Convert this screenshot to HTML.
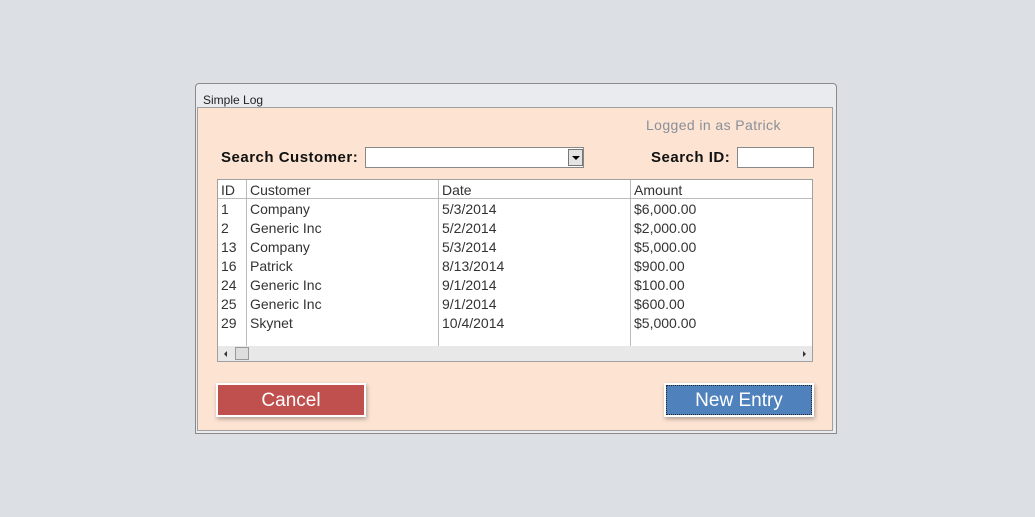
<!DOCTYPE html>
<html><head><style>
body{margin:0;width:1035px;height:517px;background:#dce0e4;position:relative;font-family:"Liberation Sans",sans-serif;overflow:hidden}
.a{position:absolute}
.win{left:195px;top:83px;width:640px;height:349px;border:1px solid #8a8a8a;border-radius:4px 4px 0 0;background:#e9ebee}
.title{left:203px;top:93px;font-size:12px;color:#222}
.body{left:197px;top:107px;width:636px;height:324px;background:#fce3d2;border:1px solid #a0a0a0;box-sizing:border-box}
.lbl{font-weight:bold;font-size:15px;color:#111;letter-spacing:0.5px}
.grid{left:217px;top:179px;width:596px;height:183px;background:#fff;border:1px solid #a0a0a0;box-sizing:border-box}
.row{position:absolute;left:0;font-size:14px;color:#333;height:19px;line-height:19px}
.c{position:absolute;white-space:nowrap}
.btn{position:absolute;color:#fff;font-size:19px;text-align:center;line-height:32px;box-shadow:0 0 0 2px #fff,1px 2px 4px 2px rgba(0,0,0,.3)}
</style></head><body>
<div class="a win"></div>
<div class="a title">Simple Log</div>
<div class="a body"></div>
<div class="a" style="left:646px;top:117px;font-size:14px;color:#8a8f98;letter-spacing:0.4px">Logged in as Patrick</div>
<div class="a lbl" style="left:221px;top:149px">Search Customer:</div>
<div class="a" style="left:365px;top:147px;width:219px;height:21px;background:#fff;border:1px solid #888;box-sizing:border-box"></div>
<div class="a" style="left:568px;top:149px;width:15px;height:17px;background:#e4e4e4;border:1px solid #777;box-sizing:border-box"></div>
<div class="a" style="left:572px;top:156px;width:0;height:0;border-left:4px solid transparent;border-right:4px solid transparent;border-top:4px solid #000"></div>
<div class="a lbl" style="left:651px;top:149px">Search ID:</div>
<div class="a" style="left:737px;top:147px;width:77px;height:21px;background:#fff;border:1px solid #888;box-sizing:border-box"></div>
<div class="a grid">
<div class="a" style="left:0;top:18px;width:594px;height:1px;background:#bbb"></div>
<div class="a" style="left:28px;top:0;width:1px;height:166px;background:#bbb"></div>
<div class="a" style="left:220px;top:0;width:1px;height:166px;background:#bbb"></div>
<div class="a" style="left:412px;top:0;width:1px;height:166px;background:#bbb"></div>
<div class="row" style="top:1px"><span class="c" style="left:3px">ID</span><span class="c" style="left:32px">Customer</span><span class="c" style="left:224px">Date</span><span class="c" style="left:416px">Amount</span></div>
<div class="row" style="top:20px"><span class="c" style="left:3px">1</span><span class="c" style="left:32px">Company</span><span class="c" style="left:224px">5/3/2014</span><span class="c" style="left:416px">$6,000.00</span></div>
<div class="row" style="top:39px"><span class="c" style="left:3px">2</span><span class="c" style="left:32px">Generic Inc</span><span class="c" style="left:224px">5/2/2014</span><span class="c" style="left:416px">$2,000.00</span></div>
<div class="row" style="top:58px"><span class="c" style="left:3px">13</span><span class="c" style="left:32px">Company</span><span class="c" style="left:224px">5/3/2014</span><span class="c" style="left:416px">$5,000.00</span></div>
<div class="row" style="top:77px"><span class="c" style="left:3px">16</span><span class="c" style="left:32px">Patrick</span><span class="c" style="left:224px">8/13/2014</span><span class="c" style="left:416px">$900.00</span></div>
<div class="row" style="top:96px"><span class="c" style="left:3px">24</span><span class="c" style="left:32px">Generic Inc</span><span class="c" style="left:224px">9/1/2014</span><span class="c" style="left:416px">$100.00</span></div>
<div class="row" style="top:115px"><span class="c" style="left:3px">25</span><span class="c" style="left:32px">Generic Inc</span><span class="c" style="left:224px">9/1/2014</span><span class="c" style="left:416px">$600.00</span></div>
<div class="row" style="top:134px"><span class="c" style="left:3px">29</span><span class="c" style="left:32px">Skynet</span><span class="c" style="left:224px">10/4/2014</span><span class="c" style="left:416px">$5,000.00</span></div>
<div class="a" style="left:0;top:166px;width:594px;height:15px;background:#e8e8e8"></div>
<div class="a" style="left:17px;top:167px;width:14px;height:13px;background:#ddd;border:1px solid #999;box-sizing:border-box"></div>
<div class="a" style="left:6px;top:171px;border-top:3px solid transparent;border-bottom:3px solid transparent;border-right:3px solid #333"></div>
<div class="a" style="left:585px;top:171px;border-top:3px solid transparent;border-bottom:3px solid transparent;border-left:3px solid #333"></div>
</div>
<div class="btn" style="left:218px;top:385px;width:146px;height:30px;background:#c0504d">Cancel</div>
<div class="btn" style="left:666px;top:385px;width:146px;height:30px;background:#4f81bd;outline:1px dotted #222;outline-offset:-1px">New Entry</div>
</body></html>
